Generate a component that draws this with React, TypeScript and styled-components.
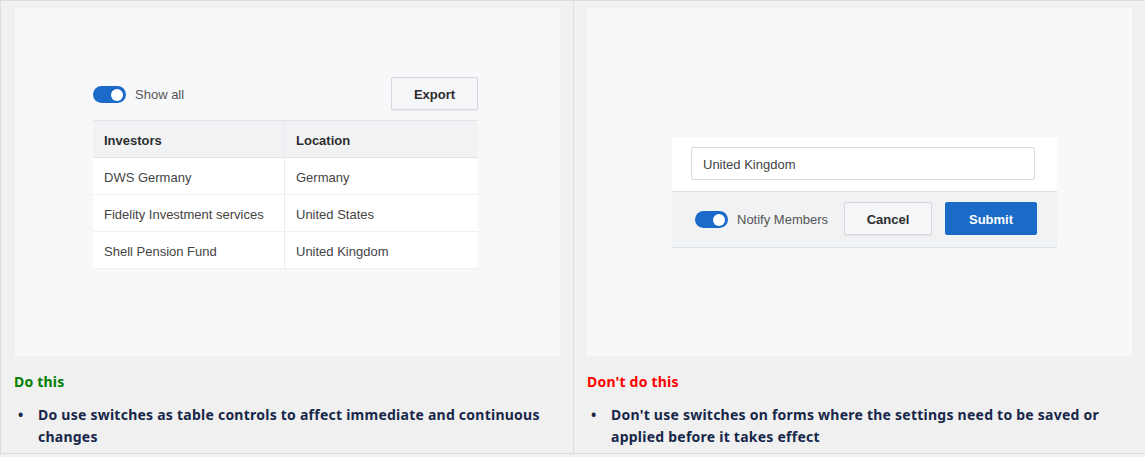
import React from "react";
import styled, {createGlobalStyle} from "styled-components";

const GlobalStyle = createGlobalStyle`
  body {
    margin: 0;
    background: #f0f0f0;
  }
`

const Page = styled.div`
  display: grid;
  grid-template-columns: 573px 1fr;
  height: 452px;
  border-top: 1px solid #dcdcdc;
  border-bottom: 1px solid #dcdcdc;
  border-left: 1px solid #dcdcdc;
  background: #f0f0f0;
`

const Column = styled.div<{ $divider?: boolean }>`
  display: flex;
  flex-direction: column;
  padding: 7px 12px 0;
  border-right: ${p => p.$divider ? "1px solid #dcdcdc" : "none"};
`

const Preview = styled.div<{ $offset: number }>`
  height: 348px;
  margin-left: ${p => p.$offset}px;
  width: 545px;
  background: #f7f8fa;
  display: flex;
  flex-direction: column;
  font-family: "Liberation Sans", Arial, sans-serif;
  font-size: 13px;
`

const Heading = styled.div<{ $tone: "good" | "bad" }>`
  margin: 16px 0 0 1px;
  font-family: "Noto Sans", "Open Sans", sans-serif;
  font-weight: 700;
  font-size: 14px;
  line-height: 20px;
  letter-spacing: 0.2px;
  color: ${p => p.$tone === "good" ? "#008000" : "#ff0000"};
`

const Notes = styled.ul`
  margin: 12px 0 0;
  padding: 0;
  list-style: none;
  font-family: "Noto Sans", "Open Sans", sans-serif;
  font-weight: 700;
  font-size: 14px;
  line-height: 22px;
  letter-spacing: 0.24px;
  color: #17274a;
`

const Note = styled.li`
  display: grid;
  grid-template-columns: 25px 1fr;

  &::before {
    content: "•";
    padding-left: 5px;
  }
`

/* table example */

const TableArea = styled.div`
  padding: 69px 0 0 78px;
  width: 385px;
  display: flex;
  flex-direction: column;
  gap: 10px;
`

const Toolbar = styled.div`
  display: flex;
  align-items: center;
  justify-content: space-between;
  height: 33px;
`

const SwitchLabel = styled.label`
  display: flex;
  align-items: center;
  gap: 9px;
  padding-top: 2px;
  color: #555;
`

const Track = styled.span`
  width: 33px;
  height: 17px;
  border-radius: 9px;
  background: #1b6ac9;
  display: flex;
  align-items: center;
  justify-content: flex-end;
  padding: 0 3px;
  box-sizing: border-box;
`

const Knob = styled.span`
  width: 12px;
  height: 12px;
  border-radius: 50%;
  background: #fff;
`

const Button = styled.button<{ $primary?: boolean; $w: number }>`
  width: ${p => p.$w}px;
  height: 33px;
  box-sizing: border-box;
  padding: 2px 0 0;
  border-radius: 2px;
  border: 1px solid ${p => p.$primary ? "#1a6bc8" : "#d6d8dc"};
  background: ${p => p.$primary ? "#1a6bc8" : "#f5f6f8"};
  color: ${p => p.$primary ? "#fff" : "#2b2b2b"};
  font-family: "Liberation Sans", Arial, sans-serif;
  font-size: 13px;
  font-weight: 700;
  box-shadow: ${p => p.$primary ? "none" : "0 1px 1px rgba(0,0,0,0.06)"};
`

const Table = styled.div`
  display: grid;
  grid-template-columns: 192px 193px;
  border-top: 1px solid #e2e4e7;
`

const Cell = styled.div<{ $head?: boolean; $last?: boolean }>`
  height: 37px;
  box-sizing: border-box;
  display: flex;
  align-items: center;
  padding: 2px 0 0 11px;
  background: ${p => p.$head ? "#f1f2f4" : "#fff"};
  color: ${p => p.$head ? "#2e2e2e" : "#444"};
  font-weight: ${p => p.$head ? 700 : 400};
  border-bottom: 1px solid ${p => p.$head ? "#e2e4e7" : "#eef0f2"};
  border-right: ${p => p.$last ? "none" : "1px solid #e8eaed"};
`

/* form example */

const FormArea = styled.div`
  padding: 129px 0 0 85px;
`

const Card = styled.div`
  width: 385px;
  display: flex;
  flex-direction: column;
`

const CardBody = styled.div`
  background: #fff;
  padding: 10px 22px 11px 19px;
  border-bottom: 1px solid #dde0e4;
`

const Input = styled.div`
  height: 33px;
  box-sizing: border-box;
  border: 1px solid #d8dbdf;
  border-radius: 2px;
  background: #fff;
  display: flex;
  align-items: center;
  padding: 2px 0 0 11px;
  color: #444;
`

const CardFooter = styled.div`
  background: #f1f2f4;
  border-bottom: 1px solid #dde0e4;
  padding: 10px 0 12px 23px;
  display: flex;
  align-items: center;
`

const FooterSwitch = styled(SwitchLabel)`
  margin-right: 16px;
`

const Actions = styled.div`
  display: flex;
  gap: 13px;
`

const investors = [
  ["DWS Germany", "Germany"],
  ["Fidelity Investment services", "United States"],
  ["Shell Pension Fund", "United Kingdom"],
]

function Switch({label}: { label: string }) {
  return (
    <>
      <Track><Knob /></Track>
      {label}
    </>
  )
}

function App() {
  return (
    <>
      <GlobalStyle />
      <Page>
        <Column $divider>
          <Preview $offset={2}>
            <TableArea>
              <Toolbar>
                <SwitchLabel><Switch label="Show all" /></SwitchLabel>
                <Button $w={87}>Export</Button>
              </Toolbar>
              <Table>
                <Cell $head>Investors</Cell>
                <Cell $head $last>Location</Cell>
                {investors.map(([name, place]) => (
                  <React.Fragment key={name}>
                    <Cell>{name}</Cell>
                    <Cell $last>{place}</Cell>
                  </React.Fragment>
                ))}
              </Table>
            </TableArea>
          </Preview>
          <Heading $tone="good">Do this</Heading>
          <Notes>
            <Note>Do use switches as table controls to affect immediate and continuous changes</Note>
          </Notes>
        </Column>
        <Column>
          <Preview $offset={1}>
            <FormArea>
              <Card>
                <CardBody>
                  <Input>United Kingdom</Input>
                </CardBody>
                <CardFooter>
                  <FooterSwitch><Switch label="Notify Members" /></FooterSwitch>
                  <Actions>
                    <Button $w={88}>Cancel</Button>
                    <Button $primary $w={92}>Submit</Button>
                  </Actions>
                </CardFooter>
              </Card>
            </FormArea>
          </Preview>
          <Heading $tone="bad">Don't do this</Heading>
          <Notes>
            <Note>Don't use switches on forms where the settings need to be saved or applied before it takes effect</Note>
          </Notes>
        </Column>
      </Page>
    </>
  );
}

export default App;
